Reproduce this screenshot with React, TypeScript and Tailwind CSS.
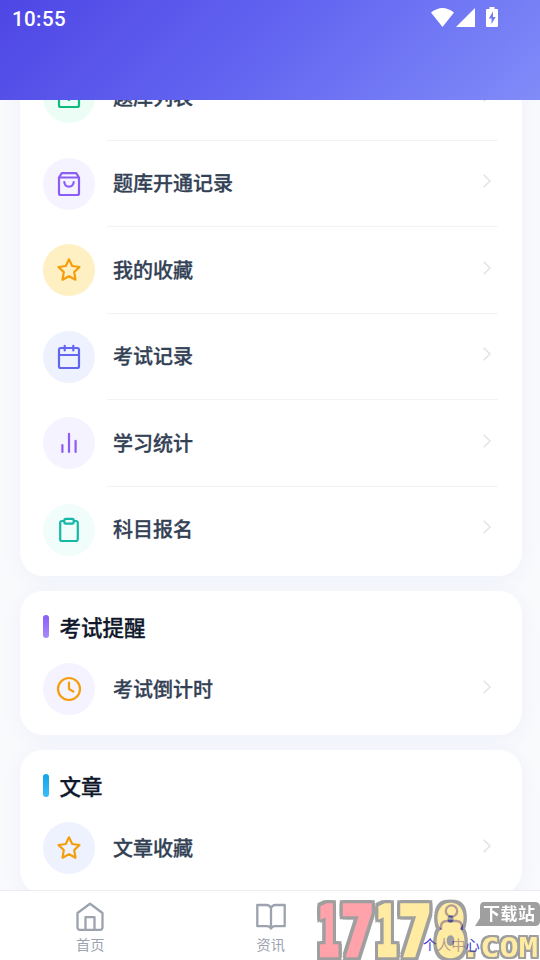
import type { ReactNode } from "react";
import clsx from "clsx";

interface MenuItemProps {
  label: string;
  icon: ReactNode;
  color: string;
  divider?: boolean;
}

const Glyph = ({ children }: { children: ReactNode }) => (
  <svg
    width="26"
    height="26"
    viewBox="0 0 26 26"
    fill="none"
    stroke="currentColor"
    strokeWidth="2.2"
    strokeLinecap="round"
    strokeLinejoin="round"
  >
    {children}
  </svg>
);

const StarIcon = () => (
  <Glyph>
    <path d="M13 2.3 16.2 9l7.3 1-5.3 5.1 1.3 7.6-6.5-3.5-6.5 3.5 1.3-7.6L2.5 10l7.3-1z" />
  </Glyph>
);

const bankItems: MenuItemProps[] = [
  {
    label: "题库列表",
    color: "bg-[#ecfdf5] text-[#10b981]",
    icon: (
      <Glyph>
        <rect x="3" y="3" width="20" height="20" rx="1.8" />
        <path d="m8.5 11.5 4.5 4.5 5-6" />
      </Glyph>
    ),
  },
  {
    label: "题库开通记录",
    color: "bg-[#f5f3ff] text-[#8b5cf6]",
    icon: (
      <Glyph>
        <path d="M3 6.5 5.8 2.2h14.4L23 6.5v15.7a1.8 1.8 0 0 1-1.8 1.8H4.8A1.8 1.8 0 0 1 3 22.2zM3 6.5h20" />
        <path d="M8.3 11c.6 6.2 8.8 6.2 9.4 0" />
      </Glyph>
    ),
  },
  {
    label: "我的收藏",
    color: "bg-[#fef0c3] text-[#f59e0b]",
    icon: <StarIcon />,
  },
  {
    label: "考试记录",
    color: "bg-[#eef2ff] text-[#6366f1]",
    icon: (
      <Glyph>
        <rect x="3" y="4" width="20" height="20" rx="1.8" />
        <path d="M3 11h20M8.7 1.8v4.6M17.3 1.8v4.6" />
      </Glyph>
    ),
  },
  {
    label: "学习统计",
    color: "bg-[#f5f3ff] text-[#8b5cf6]",
    icon: (
      <Glyph>
        <path d="M6.4 15v7M13 3.9v18.1M19.6 10.8v11.2" />
      </Glyph>
    ),
  },
  {
    label: "科目报名",
    color: "bg-[#f0fdfa] text-[#14b8a6]",
    icon: (
      <Glyph>
        <path d="M8 4H6a1.8 1.8 0 0 0-1.8 1.8v16.4A1.8 1.8 0 0 0 6 24h14a1.8 1.8 0 0 0 1.8-1.8V5.8A1.8 1.8 0 0 0 20 4h-2" />
        <rect x="8.3" y="1.9" width="9.4" height="4.7" rx="1.5" />
      </Glyph>
    ),
  },
];

function MenuItem({ label, icon, color, divider }: MenuItemProps) {
  return (
    <div className="flex">
      <div
        className={clsx(
          "my-[17.25px] flex size-[52px] shrink-0 items-center justify-center rounded-full",
          color
        )}
      >
        {icon}
      </div>
      <div
        className={clsx(
          "mr-px ml-3 flex flex-1 items-center justify-between border-b pr-[7px] pl-1.5",
          divider ? "border-[#f1f3f7]" : "border-transparent"
        )}
      >
        <span className="text-[20px] leading-7 font-medium text-[#334155] [-webkit-text-stroke:0.3px]">
          {label}
        </span>
        <svg
          className="mb-1"
          width="8"
          height="14"
          viewBox="0 0 8 14"
          fill="none"
          stroke="#dfe2e7"
          strokeWidth="1.5"
        >
          <path d="m.7.7 6.3 6.3-6.3 6.3" />
        </svg>
      </div>
    </div>
  );
}

function Card({ children, className }: { children: ReactNode; className?: string }) {
  return (
    <section
      className={clsx(
        "rounded-[23px] bg-white px-[23px] shadow-[0_4px_22px_rgba(79,70,229,0.05)]",
        className
      )}
    >
      {children}
    </section>
  );
}

function SectionTitle({ title, bar }: { title: string; bar: string }) {
  return (
    <div className="-mb-[9px] flex h-[29px] items-center gap-[10.5px]">
      <span className={clsx("mb-[6px] h-[23px] w-1.5 rounded-full", bar)} />
      <h2 className="mb-[5px] text-[21.5px] leading-7 font-medium text-[#0f172a] [-webkit-text-stroke:0.3px]">
        {title}
      </h2>
    </div>
  );
}

function NavItem({ label, active, children }: { label: string; active?: boolean; children: ReactNode }) {
  return (
    <div
      className={clsx(
        "flex flex-1 flex-col items-center pt-[11px]",
        active ? "text-[#4338dc]" : "text-[#9ca3af]"
      )}
    >
      <svg
        width="30"
        height="30"
        viewBox="0 0 30 30"
        fill="none"
        stroke="currentColor"
        strokeWidth="2.3"
        strokeLinejoin="round"
      >
        {children}
      </svg>
      <span className="mt-[2px] text-[14.2px] leading-5 whitespace-nowrap">{label}</span>
    </div>
  );
}

const digits = [
  { char: "1", x: 3, width: 21, fill: "#ff6672" },
  { char: "7", x: 26, width: 33, fill: "#ff6672" },
  { char: "1", x: 61, width: 21, fill: "#ffdf63" },
  { char: "7", x: 83.5, width: 33, fill: "#ffdf63" },
  { char: "8", x: 120, width: 31, fill: "#ffdf63" },
];

function SiteMark() {
  return (
    <svg
      className="overflow-visible opacity-60"
      width="225"
      height="64"
      viewBox="0 0 225 64"
      fontFamily="DejaVu Sans Mono, monospace"
      fontWeight="700"
      strokeLinejoin="miter"
    >
      <g className="[filter:drop-shadow(3px_0_0_#606060)_drop-shadow(-3px_0_0_#606060)_drop-shadow(0_3px_0_#606060)_drop-shadow(0_-3px_0_#606060)]">
        {digits.map(({ char, x, width, fill }, index) => (
          <text
            key={index}
            x={x}
            y="59"
            fontSize="67"
            textLength={width}
            lengthAdjust="spacingAndGlyphs"
            fill={fill}
            stroke={fill}
            strokeWidth="4.5"
          >
            {char}
          </text>
        ))}
      </g>
      <g className="[filter:drop-shadow(2px_0_0_#606060)_drop-shadow(-2px_0_0_#606060)_drop-shadow(0_2px_0_#606060)_drop-shadow(0_-2px_0_#606060)]">
        <text
          x="146"
          y="61"
          fontSize="26"
          textLength="77"
          lengthAdjust="spacingAndGlyphs"
          fill="#ffdf63"
        >
          .COM
        </text>
      </g>
      <path d="M169 6h51q5 0 5 5v14q0 5-5 5h-60l5-8V11q0-5 4-5z" fill="#606060" />
      <text
        x="168"
        y="24"
        fontSize="17"
        fontFamily="Noto Sans CJK SC, sans-serif"
        textLength="52"
        fill="#fff"
      >
        下载站
      </text>
    </svg>
  );
}

export default function App() {
  return (
    <div className="relative flex h-[960px] w-[540px] flex-col overflow-hidden bg-[#f8fafc] font-['Noto_Sans_CJK_SC',sans-serif]">
      <header className="z-10 flex h-[100px] shrink-0 items-start justify-between bg-[linear-gradient(135deg,#4f46e5_0%,#6366f1_50%,#818cf8_100%)] pt-[7px] pr-[41px] pl-3 text-white">
        <span className="font-[Roboto] text-[20.5px] leading-6 font-medium tracking-[0.4px]">
          10:55
        </span>
        <svg width="68" height="20" viewBox="0 0 68 20" fill="currentColor">
          <path d="M0 5.5Q11.500-3.500 23 5.500L11.500 20zM44 1v19H25z" />
          <path
            fillRule="evenodd"
            d="M58.500 2V0h5v2H66a1 1 0 0 1 1 1v16a1 1 0 0 1-1 1H56a1 1 0 0 1-1-1V3a1 1 0 0 1 1-1zM62 4.500l-4.200 7h2.700V17l4.200-7H62z"
          />
        </svg>
      </header>

      <main className="-mt-[46px] flex min-h-0 flex-1 flex-col gap-[15px] overflow-hidden pr-[18px] pl-5">
        <Card className="h-[522px] shrink-0">
          {bankItems.map((item, index) => (
            <MenuItem key={item.label} {...item} divider={index < bankItems.length - 1} />
          ))}
        </Card>
        <Card className="h-36 shrink-0 pt-6">
          <SectionTitle title="考试提醒" bar="bg-linear-to-b from-[#8b5cf6] to-[#a78bfa]" />
          <div className="mt-[11px]">
            <MenuItem
              label="考试倒计时"
              color="bg-[#f5f3ff] text-[#f59e0b]"
              icon={
                <Glyph>
                  <circle cx="13" cy="13" r="11" />
                  <path d="M13 6.5v6.5l4.3 2.5" />
                </Glyph>
              }
            />
          </div>
        </Card>
        <Card className="h-36 shrink-0 pt-6">
          <SectionTitle title="文章" bar="bg-linear-to-b from-[#0ea5e9] to-[#38bdf8]" />
          <div className="mt-[11px]">
            <MenuItem label="文章收藏" color="bg-[#eef2ff] text-[#f59e0b]" icon={<StarIcon />} />
          </div>
        </Card>
      </main>

      <nav className="z-10 flex h-[70px] w-[541.5px] shrink-0 border-t border-[#ebecef] bg-white">
        <NavItem label="首页">
          <path d="M2.5 11 15 1.8 27.5 11v14.5a2.3 2.3 0 0 1-2.3 2.3H4.8a2.3 2.3 0 0 1-2.3-2.3zM10.5 27.8V15.2h9v12.6" />
        </NavItem>
        <NavItem label="资讯">
          <path d="M15 6c-1-2.200-2.300-3-4.500-3H1.300v21.200H11c2.200 0 3.300.6 4 2.300.7-1.700 1.800-2.300 4-2.300h9.700V3h-9.200c-2.200 0-3.500.8-4.500 3zM15 6v20.500" />
        </NavItem>
        <NavItem label="个人中心" active>
          <circle cx="15.5" cy="9" r="5.7" />
          <path d="M5 28v-3c0-4 2.500-6 6-6h9c3.500 0 6 2 6 6v3" />
        </NavItem>
      </nav>

      <div className="absolute right-0 bottom-0 z-20">
        <SiteMark />
      </div>
    </div>
  );
}
